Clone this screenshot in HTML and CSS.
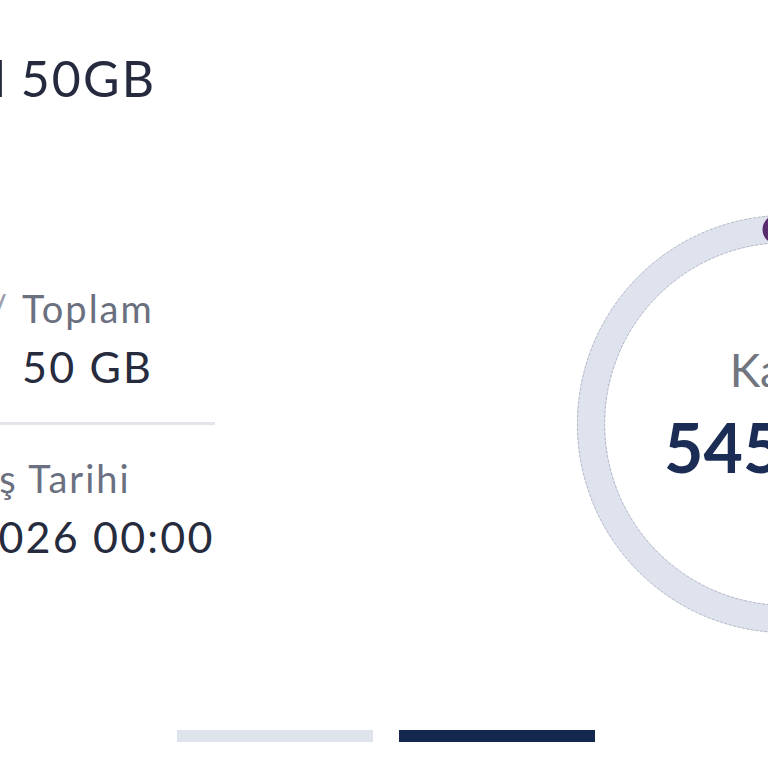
FILE: index.html
```html
<!DOCTYPE html>
<html lang="tr">
<head>
    <meta charset="UTF-8">
    <meta name="viewport" content="width=device-width, initial-scale=1.0">
    <title>Paket Detayı</title>
    <link rel="stylesheet" href="styles.css">
</head>
<body>

    <div class="screen">
        <div class="card">
            <div class="package-title">Sosyal 50GB</div>

            <div class="card-body">
                <div class="info">
                    <div class="usage">
                        <div class="label">Kalan</div>
                        <div class="label slash">/</div>
                        <div class="label">Toplam</div>
                        <div class="value"></div>
                        <div class="value"></div>
                        <div class="value">50 GB</div>
                    </div>

                    <div class="divider"></div>

                    <div class="renewal">
                        <div class="label">Yenileniş Tarihi</div>
                        <div class="value">01.01.2026 00:00</div>
                    </div>
                </div>

                <!-- Remaining gauge -->
                <div class="gauge">
                    <svg class="gauge-ring" width="418" height="418" viewBox="0 0 418 418">
                        <circle cx="209" cy="209" r="195" fill="none" stroke="#dfe3ee" stroke-width="28"/>
                        <circle cx="209" cy="209" r="208.6" fill="none" stroke="#9ea3b3" stroke-width="0.7" stroke-dasharray="3 1.5"/>
                        <circle cx="209" cy="209" r="181.4" fill="none" stroke="#9ea3b3" stroke-width="0.7" stroke-dasharray="3 1.5"/>
                        <circle cx="200" cy="14.5" r="14.5" fill="#5a2c6e"/>
                    </svg>
                    <div class="gauge-text">
                        <div class="gauge-label">Kalan</div>
                        <div class="gauge-value">545 MB</div>
                    </div>
                </div>
            </div>
        </div>
    </div>

    <div class="pager">
        <span class="pager-dot"></span>
        <span class="pager-dot active"></span>
    </div>

</body>
</html>
```

FILE: styles.css
```css
/* Basic Reset */
* {
    margin: 0;
    padding: 0;
    box-sizing: border-box;
}

html, body {
    width: 768px;
    height: 768px;
    overflow: hidden;
}

body {
    font-family: 'Lato', 'Noto Sans', sans-serif;
    background: #ffffff;
    color: #262b3d;
}

/* Screen is wider than the viewport, only a part of it is visible */
.screen {
    width: 1200px;
    margin-left: -146px;
    padding-top: 48px;
}

.package-title {
    font-size: 50px;
    line-height: 60px;
    letter-spacing: 2.2px;
    word-spacing: -2px;
    padding-left: 2px;
    color: #252a3f;
}

.card-body {
    display: flex;
    align-items: center;
    margin-top: 107px;
}

.info {
    width: 361px;
    margin-right: 362px;
}

.label {
    font-size: 38px;
    line-height: 46px;
    letter-spacing: 2px;
    color: #6b7080;
    white-space: nowrap;
}

.value {
    font-size: 43px;
    line-height: 52px;
    min-height: 52px;
    letter-spacing: 2.2px;
    color: #262b3d;
    white-space: nowrap;
}

.usage {
    display: grid;
    grid-template-columns: 136px 32px auto;
    row-gap: 10px;
}

.slash {
    color: #9ba0ad;
}

.divider {
    height: 3px;
    background: #e3e5ea;
    margin: 29px 0 30px 0;
}

.renewal .value {
    margin-top: 10px;
    margin-left: -16px;
}

/* Gauge */
.gauge {
    position: relative;
    width: 418px;
    height: 418px;
    flex-shrink: 0;
}

.gauge-ring {
    display: block;
}

.gauge-text {
    position: absolute;
    top: 0;
    left: 0;
    right: 0;
    bottom: 0;
    display: flex;
    flex-direction: column;
    align-items: center;
    justify-content: center;
    padding-bottom: 20px;
}

.gauge-label {
    font-size: 46px;
    line-height: 56px;
    color: #70757f;
    margin-bottom: 10px;
}

.gauge-value {
    font-size: 68px;
    line-height: 78px;
    font-weight: bold;
    color: #1b2d55;
}

/* Slider indicator */
.pager {
    display: flex;
    justify-content: center;
    gap: 26px;
    padding-left: 3px;
    margin-top: 97px;
}

.pager-dot {
    width: 196px;
    height: 12px;
    background: #dfe3ec;
}

.pager-dot.active {
    background: #14284f;
}
```
